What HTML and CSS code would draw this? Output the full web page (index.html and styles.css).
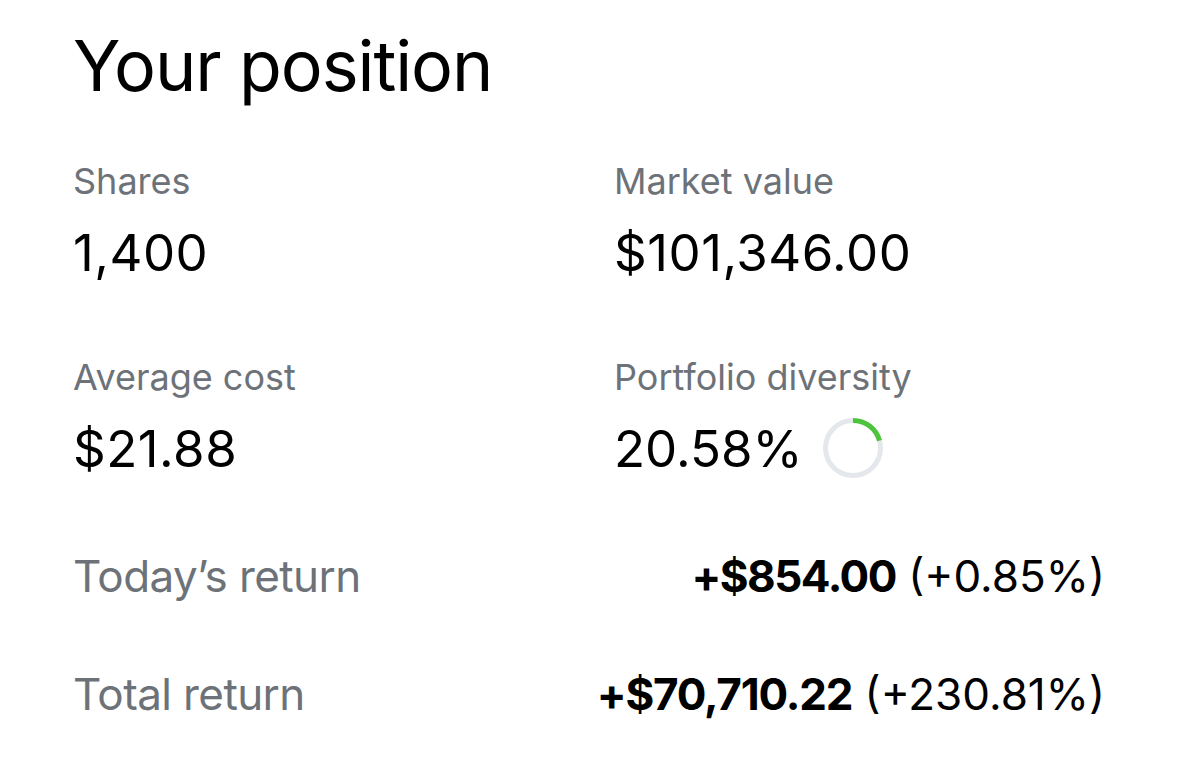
FILE: index.html
```html
<!DOCTYPE html>
<html>
<head>
<meta charset="utf-8">
<link rel="stylesheet" href="styles.css">
</head>
<body>
<main class="position">
  <h1 class="title">Your position</h1>
  <div class="stats">
    <div class="stat">
      <div class="label">Shares</div>
      <div class="value">1,400</div>
    </div>
    <div class="stat">
      <div class="label">Market value</div>
      <div class="value">$101,346.00</div>
    </div>
    <div class="stat">
      <div class="label">Average cost</div>
      <div class="value">$21.88</div>
    </div>
    <div class="stat">
      <div class="label">Portfolio diversity</div>
      <div class="value value-ring">20.58%
        <svg class="ring" width="60" height="60" viewBox="0 0 60 60">
          <circle cx="30" cy="30" r="27.5" fill="none" stroke="#e4e7eb" stroke-width="5"/>
          <circle cx="30" cy="30" r="27.5" fill="none" stroke="#4cc43c" stroke-width="5" stroke-dasharray="35.6 200" transform="rotate(-90 30 30)"/>
        </svg>
      </div>
    </div>
  </div>
  <div class="returns">
    <div class="ret-row">
      <span class="label ret-label">Today’s return</span>
      <span class="ret-value"><b>+$854.00</b> (+0.85%)</span>
    </div>
    <div class="ret-row">
      <span class="label ret-label">Total return</span>
      <span class="ret-value"><b class="wide">+$70,710.22</b> (+230.81%)</span>
    </div>
  </div>
</main>
</body>
</html>
```

FILE: styles.css
```css
html, body {
  margin: 0;
  padding: 0;
  background: #ffffff;
}
body {
  font-family: Inter, "Noto Sans", "Liberation Sans", sans-serif;
  color: #000;
}
.position {
  padding: 26px 74px 0 73px;
}
.title {
  margin: 0;
  font-size: 70px;
  line-height: 80px;
  font-weight: 400;
  letter-spacing: -1.1px;
}
.stats {
  margin-top: 53px;
  display: grid;
  grid-template-columns: 541px 1fr;
  row-gap: 72px;
}
.stat {
  display: flex;
  flex-direction: column;
  gap: 20px;
}
.label {
  color: #6d7278;
  font-size: 36px;
  line-height: 44px;
}
.value {
  font-size: 51px;
  line-height: 60px;
  letter-spacing: 0.5px;
}
.value-ring {
  display: flex;
  align-items: center;
  gap: 20px;
  letter-spacing: 0;
}
.ring {
  display: block;
  margin-top: -3px;
}
.returns {
  margin-top: 71px;
  display: flex;
  flex-direction: column;
  gap: 66px;
}
.ret-row {
  display: flex;
  justify-content: space-between;
  align-items: baseline;
  font-size: 44px;
  line-height: 52px;
}
.ret-label {
  font-size: 44px;
  line-height: 52px;
  letter-spacing: -0.6px;
}
.ret-value b {
  font-weight: 700;
  letter-spacing: -1.5px;
}
.ret-value b.wide {
  letter-spacing: -1.2px;
}
```
